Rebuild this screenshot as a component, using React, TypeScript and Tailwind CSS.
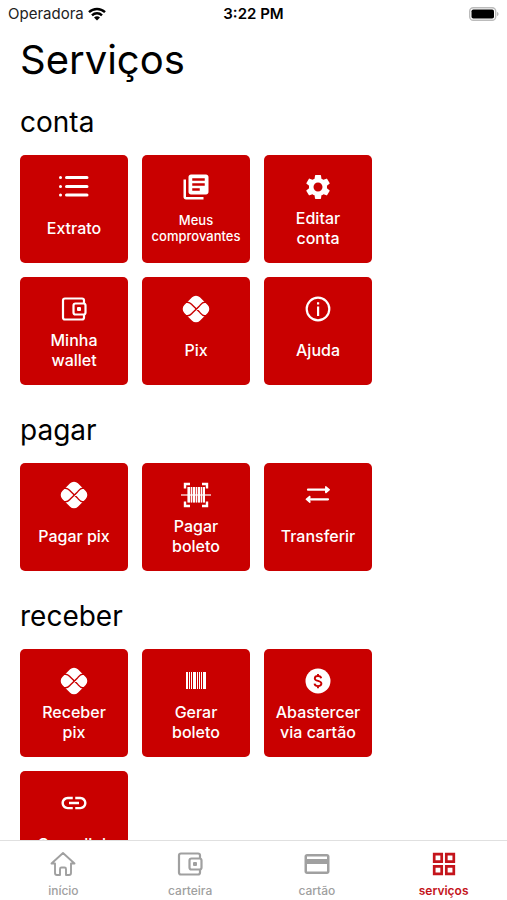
import type { ComponentType, SVGProps } from 'react'
import { MdCreditCard, MdLibraryBooks, MdLink, MdSettings } from 'react-icons/md'

type Icon = ComponentType<SVGProps<SVGSVGElement>>

function ListIcon(props: SVGProps<SVGSVGElement>) {
  return (
    <svg aria-hidden="true" viewBox="0 0 30 30" {...props}>
      <path d="M7.500 5.500h20.500M7.500 14.500h20.500M7.500 23h20.500" stroke="currentColor" strokeWidth="3" strokeLinecap="round" />
      <path d="M1.500 5.500h.01M1.500 14.500h.01M1.500 23h.01" stroke="currentColor" strokeWidth="3" strokeLinecap="round" />
    </svg>
  )
}

function WalletIcon(props: SVGProps<SVGSVGElement>) {
  return (
    <svg aria-hidden="true" viewBox="0 0 30 30" fill="none" stroke="currentColor" strokeWidth="2.200" {...props}>
      <path d="M25 9V6.500a2 2 0 0 0-2-2H6a2 2 0 0 0-2 2v17a2 2 0 0 0 2 2h17a2 2 0 0 0 2-2V21" />
      <rect x="14.500" y="9.500" width="12" height="11" rx="2" />
      <rect x="18" y="13" width="4" height="4" rx="1" fill="currentColor" stroke="none" />
    </svg>
  )
}

function PixIcon(props: SVGProps<SVGSVGElement>) {
  return (
    <svg aria-hidden="true" viewBox="0 0 30 30" {...props}>
      <rect x="4" y="4" width="22" height="22" rx="5.500" fill="currentColor" transform="rotate(45 15 15)" />
      <path
        d="M4.500 8.200h2c2.500 0 3.500 1.500 5 3L18 17.600c2 2 3 4.200 5.500 4.200h2M4.500 21.800h2c2.500 0 3.500-1.500 5-3L18 12.400c2-2 3-4.200 5.500-4.200h2"
        fill="none"
        stroke="#c90000"
        strokeWidth="1.400"
      />
    </svg>
  )
}

function InfoIcon(props: SVGProps<SVGSVGElement>) {
  return (
    <svg aria-hidden="true" viewBox="0 0 30 30" {...props}>
      <circle cx="15" cy="15" r="11.300" fill="none" stroke="currentColor" strokeWidth="2.200" />
      <path d="M14 8.300h2.200v2.200H14zM14 12.500h2.200v9.500H14z" fill="currentColor" />
    </svg>
  )
}

function MoneyIcon(props: SVGProps<SVGSVGElement>) {
  return (
    <svg aria-hidden="true" viewBox="0 0 30 30" {...props}>
      <circle cx="15" cy="15" r="12.500" fill="currentColor" />
      <path
        d="M18.200 12.200c-.3-1.500-1.500-2.200-3.200-2.200-1.900 0-3.200.9-3.200 2.400 0 3.400 6.600 1.700 6.600 5.200 0 1.600-1.400 2.500-3.400 2.500-1.900 0-3.200-.9-3.500-2.500M15 8v2M15 20v2.200"
        fill="none"
        stroke="#c90000"
        strokeWidth="1.900"
      />
    </svg>
  )
}

function BarcodeIcon(props: SVGProps<SVGSVGElement>) {
  return (
    <svg aria-hidden="true" viewBox="0 0 30 30" fill="currentColor" {...props}>
      <path d="M5 6h2v17H5zM8 6h1v17H8zM10 6h1v17h-1zM12 6h3v17h-3zM16 6h1v17h-1zM18 6h1v17h-1zM20 6h1v17h-1zM22 6h3v17h-3z" />
    </svg>
  )
}

function ScanIcon(props: SVGProps<SVGSVGElement>) {
  return (
    <svg aria-hidden="true" viewBox="0 0 30 30" {...props}>
      <path
        d="M4 8.500V4h5M21 4h5v4.500M26 21.500V26h-5M9 26H4v-4.500"
        fill="none"
        stroke="currentColor"
        strokeWidth="2.400"
      />
      <path
        d="M6.500 7h2.500v15.500H6.500zM10 7h1v15.500h-1zM12 7h2v15.500h-2zM15 7h1v15.500h-1zM17 7h2v15.500h-2zM20 7h1v15.500h-1zM22 7h2v15.500h-2z"
        fill="currentColor"
      />
      <path d="M6.500 7h17.500v15.500H6.500z" fill="currentColor" fillOpacity=".35" />
      <path d="M0 15h30" stroke="currentColor" strokeWidth="1.200" />
    </svg>
  )
}

function TransferIcon(props: SVGProps<SVGSVGElement>) {
  return (
    <svg aria-hidden="true" viewBox="0 0 30 30" fill="currentColor" stroke="currentColor" {...props}>
      <path d="M5 9.700h18M25 19.300H8" strokeWidth="2.200" strokeLinecap="round" />
      <path d="M22.800 6.800 26.300 9.700l-3.500 2.900zM6.800 16.400l-3.500 2.900 3.500 2.900z" strokeWidth="1.400" strokeLinejoin="round" />
    </svg>
  )
}

function HomeIcon(props: SVGProps<SVGSVGElement>) {
  return (
    <svg aria-hidden="true" viewBox="0 0 30 30" {...props}>
      <path
        d="M15 4 3.500 14.500h3.500V24a2 2 0 0 0 2 2h3v-6a1.500 1.500 0 0 1 1.500-1.500h3A1.500 1.500 0 0 1 18 20v6h3a2 2 0 0 0 2-2v-9.500h3.500z"
        fill="none"
        stroke="currentColor"
        strokeWidth="1.900"
        strokeLinejoin="round"
      />
    </svg>
  )
}

function GridIcon(props: SVGProps<SVGSVGElement>) {
  return (
    <svg aria-hidden="true" viewBox="0 0 30 30" fill="none" stroke="currentColor" strokeWidth="2.700" {...props}>
      <path d="M5.200 5.200h7.500v7.500H5.200zM17.300 5.200h7.500v7.500h-7.500zM5.200 17.300h7.500v7.500H5.200zM17.300 17.300h7.500v7.500h-7.500z" />
    </svg>
  )
}

const sections: { title: string; items: { label: string; icon: Icon; small?: boolean }[] }[] = [
  {
    title: 'conta',
    items: [
      { label: 'Extrato', icon: ListIcon },
      { label: 'Meus comprovantes', icon: MdLibraryBooks, small: true },
      { label: 'Editar conta', icon: MdSettings },
      { label: 'Minha wallet', icon: WalletIcon },
      { label: 'Pix', icon: PixIcon },
      { label: 'Ajuda', icon: InfoIcon },
    ],
  },
  {
    title: 'pagar',
    items: [
      { label: 'Pagar pix', icon: PixIcon },
      { label: 'Pagar boleto', icon: ScanIcon },
      { label: 'Transferir', icon: TransferIcon },
    ],
  },
  {
    title: 'receber',
    items: [
      { label: 'Receber pix', icon: PixIcon },
      { label: 'Gerar boleto', icon: BarcodeIcon },
      { label: 'Abastercer via cartão', icon: MoneyIcon },
      { label: 'Gerar link', icon: MdLink },
    ],
  },
]

const tabs: { label: string; icon: Icon; active?: boolean }[] = [
  { label: 'início', icon: HomeIcon },
  { label: 'carteira', icon: WalletIcon },
  { label: 'cartão', icon: MdCreditCard },
  { label: 'serviços', icon: GridIcon, active: true },
]

function StatusBar() {
  return (
    <div className="grid h-7 shrink-0 grid-cols-3 items-center px-2 text-[15px] text-[#222]">
      <div className="flex items-center gap-1">
        <span>Operadora</span>
        <svg aria-hidden="true" viewBox="0 0 18 14" className="h-3.5 w-[18px] text-black">
          <path
            d="M1 5.200a11.500 11.500 0 0 1 16 0M4 8.300a7.200 7.200 0 0 1 10 0"
            fill="none"
            stroke="currentColor"
            strokeWidth="2.400"
          />
          <path d="M9 13.500 6 10.600a4.300 4.300 0 0 1 6 0z" fill="currentColor" />
        </svg>
      </div>
      <span className="text-center font-semibold text-black">3:22 PM</span>
      <svg aria-hidden="true" viewBox="0 0 30 14" className="h-3.5 w-[30px] justify-self-end">
        <rect x=".7" y=".7" width="26" height="12.600" rx="3.500" fill="#fff" stroke="#bbb" strokeWidth="1.400" />
        <rect x="2.500" y="2.500" width="22.500" height="9" rx="1.800" fill="#000" />
        <path d="M28 5c2 .5 2 3.500 0 4z" fill="#bbb" />
      </svg>
    </div>
  )
}

function ServiceTile({ label, icon: TileIcon, small }: { label: string; icon: Icon; small?: boolean }) {
  return (
    <button
      type="button"
      className="flex h-[108px] flex-col items-center gap-1.5 rounded-[5px] bg-[#c90000] pt-[17px] text-white"
    >
      <TileIcon className="size-[30px] shrink-0" />
      <span
        className={
          small
            ? 'flex h-10 items-center px-2 text-[13px] leading-4 font-medium'
            : 'flex h-10 items-center px-2.5 text-base leading-5 font-medium'
        }
      >
        {label}
      </span>
    </button>
  )
}

export default function App() {
  return (
    <div className="flex h-screen flex-col bg-white font-['Inter','Liberation_Sans',sans-serif] text-black">
      <StatusBar />

      <main className="min-h-0 flex-1 overflow-y-auto px-5 [scrollbar-width:none]">
        <h1 className="pt-2 text-[40px] leading-[48px]">Serviços</h1>
        {sections.map((section) => (
          <section key={section.title} className="pb-[7px]">
            <h2 className="pt-5 pb-[15px] text-[28px] leading-9">{section.title}</h2>
            <div className="grid grid-cols-[repeat(auto-fill,108px)] gap-[14px]">
              {section.items.map((item) => (
                <ServiceTile key={item.label} {...item} />
              ))}
            </div>
          </section>
        ))}
      </main>

      <nav aria-label="Principal" className="grid h-[60px] shrink-0 grid-cols-4 border-t border-[#e0e0e0]">
        {tabs.map(({ label, icon: TabIcon, active }) => (
          <a
            key={label}
            href={`#${label}`}
            aria-current={active ? 'page' : undefined}
            className={
              active
                ? 'flex flex-col items-center gap-1 pt-2 text-xs font-semibold text-[#c4141b]'
                : 'flex flex-col items-center gap-1 pt-2 text-xs font-medium text-[#a0a0a0]'
            }
          >
            <TabIcon className="size-[30px]" />
            <span>{label}</span>
          </a>
        ))}
      </nav>
    </div>
  )
}
